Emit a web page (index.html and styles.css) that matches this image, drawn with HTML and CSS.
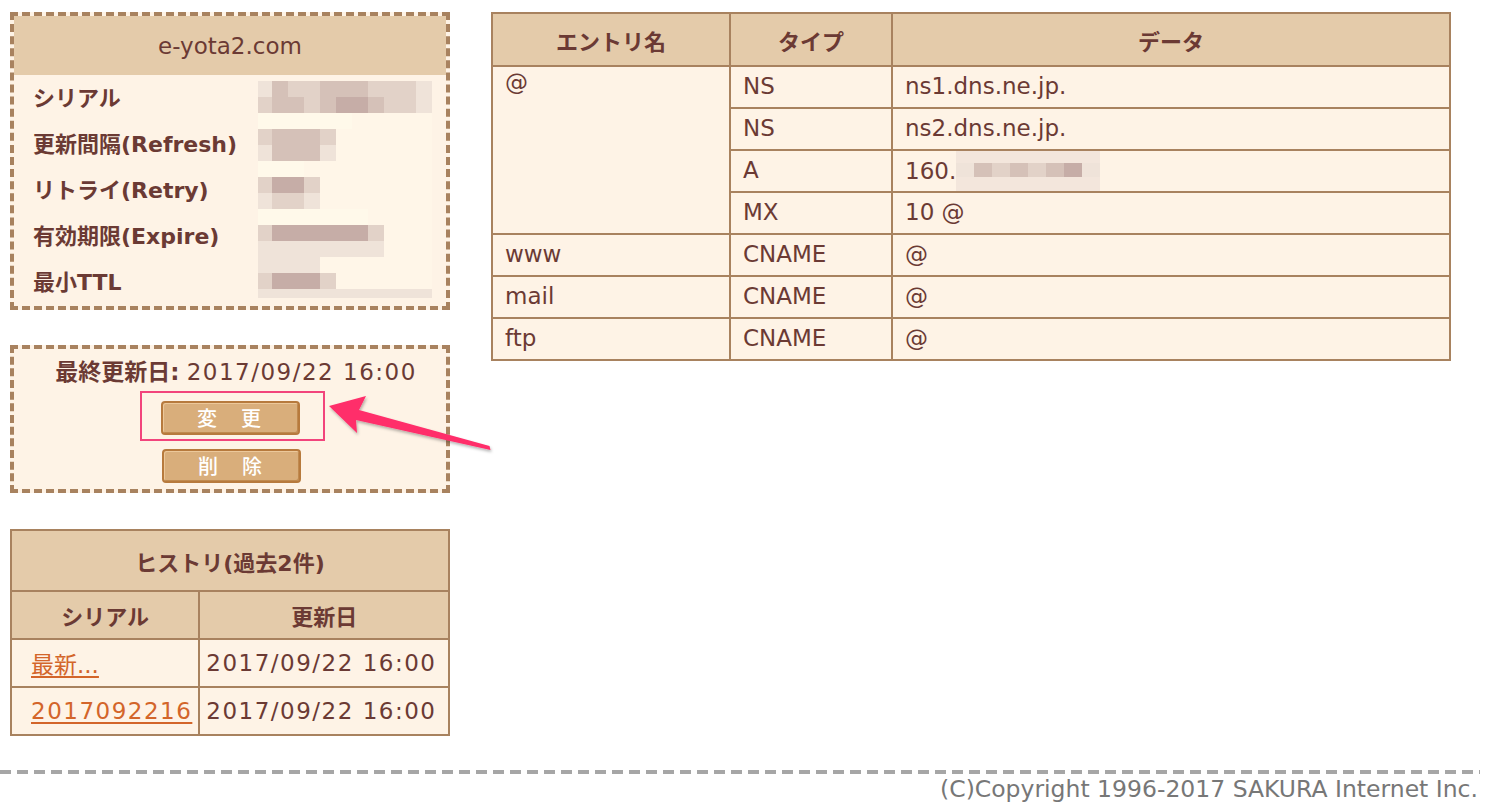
FILE: index.html
```html
<!DOCTYPE html>
<html lang="ja">
<head>
<meta charset="utf-8">
<title>DNS</title>
<link rel="stylesheet" href="styles.css">
</head>
<body>
<div class="page">
  <div class="side">
    <div class="soa">
      <div class="soa-head">e-yota2.com</div>
      <div class="soa-body">
        <div class="labels">
          <div class="lbl">シリアル</div>
          <div class="lbl">更新間隔(Refresh)</div>
          <div class="lbl">リトライ(Retry)</div>
          <div class="lbl">有効期限(Expire)</div>
          <div class="lbl">最小TTL</div>
        </div>
        <div class="mosaic">
          <div class="mr"><i class="b"></i><i class="d"></i><i class="c"></i><i class="c"></i><i class="d"></i><i class="d"></i><i class="d"></i><i class="c"></i><i class="c"></i><i class="c"></i><i class="b"></i></div>
          <div class="mr"><i class="c"></i><i class="d"></i><i class="d"></i><i class="c"></i><i class="d"></i><i class="e"></i><i class="e"></i><i class="d"></i><i class="c"></i><i class="c"></i><i class="b"></i></div>
          <div class="mr"><i class="l"></i><i class="l"></i><i class="l"></i><i class="l"></i><i class="l"></i><i class="l"></i></div>
          <div class="mr"><i class="c"></i><i class="d"></i><i class="d"></i><i class="d"></i><i class="c"></i></div>
          <div class="mr"><i class="b"></i><i class="d"></i><i class="d"></i><i class="d"></i><i class="b"></i></div>
          <div class="mr"><i class="l"></i><i class="l"></i><i class="l"></i></div>
          <div class="mr"><i class="c"></i><i class="e"></i><i class="e"></i><i class="c"></i></div>
          <div class="mr"><i class="b"></i><i class="c"></i><i class="c"></i><i class="b"></i></div>
          <div class="mr"><i class="l"></i><i class="l"></i><i class="l"></i><i class="l"></i><i class="l"></i><i class="l"></i><i class="l"></i></div>
          <div class="mr"><i class="c"></i><i class="e"></i><i class="e"></i><i class="e"></i><i class="e"></i><i class="e"></i><i class="e"></i><i class="c"></i></div>
          <div class="mr"><i class="b"></i><i class="b"></i><i class="b"></i><i class="b"></i><i class="b"></i><i class="b"></i><i class="b"></i><i class="b"></i></div>
          <div class="mr"><i class="b"></i><i class="b"></i><i class="b"></i><i class="b"></i></div>
          <div class="mr"><i class="c"></i><i class="e"></i><i class="e"></i><i class="e"></i><i class="c"></i></div>
          <div class="mr short"><i class="b"></i><i class="b"></i><i class="b"></i><i class="b"></i><i class="b"></i><i class="b"></i><i class="b"></i><i class="b"></i><i class="b"></i><i class="b"></i><i class="b"></i></div>
        </div>
      </div>
    </div>

    <div class="update">
      <div class="last"><b>最終更新日:</b> <span class="num">2017/09/22 16:00</span></div>
      <div class="mark">
        <button class="btn">変　更</button>
      </div>
      <button class="btn">削　除</button>
    </div>

    <table class="hist">
      <colgroup><col class="hc1"><col class="hc2"></colgroup>
      <tr class="h1"><th colspan="2">ヒストリ(過去2件)</th></tr>
      <tr class="h2"><th>シリアル</th><th>更新日</th></tr>
      <tr><td class="ser"><a href="#">最新...</a></td><td class="dt num">2017/09/22 16:00</td></tr>
      <tr><td class="ser"><a href="#" class="num">2017092216</a></td><td class="dt num">2017/09/22 16:00</td></tr>
    </table>
  </div>

  <table class="dns">
    <colgroup><col class="c1"><col class="c2"><col class="c3"></colgroup>
    <tr class="head"><th>エントリ名</th><th>タイプ</th><th>データ</th></tr>
    <tr><td rowspan="4" class="top">@</td><td>NS</td><td>ns1.dns.ne.jp.</td></tr>
    <tr><td>NS</td><td>ns2.dns.ne.jp.</td></tr>
    <tr><td>A</td><td class="ipcell"><span class="ip">160.</span><span class="ipblur"><i class="b"></i><i class="d"></i><i class="c"></i><i class="d"></i><i class="c"></i><i class="d"></i><i class="e"></i><i class="b"></i></span></td></tr>
    <tr><td>MX</td><td>10 @</td></tr>
    <tr><td>www</td><td>CNAME</td><td>@</td></tr>
    <tr><td>mail</td><td>CNAME</td><td>@</td></tr>
    <tr><td>ftp</td><td>CNAME</td><td>@</td></tr>
  </table>
</div>

<footer class="foot">
  <div class="dash"></div>
  <div class="copy">(C)Copyright 1996-2017 SAKURA Internet Inc.</div>
</footer>

<svg class="arrow" width="1488" height="810" viewBox="0 0 1488 810">
  <defs>
    <filter id="sh" x="-20%" y="-20%" width="140%" height="140%">
      <feDropShadow dx="1" dy="2" stdDeviation="1.5" flood-color="#000" flood-opacity="0.3"/>
    </filter>
  </defs>
  <polygon filter="url(#sh)" fill="#ff2d6b" points="329,406 366,396 359,410 489.5,446 490.5,450 356,420 357,433"/>
</svg>
</body>
</html>
```
FILE: styles.css
```css
html, body {
  margin: 0;
  padding: 0;
  background: #ffffff;
}
body {
  font-family: "DejaVu Sans", "Noto Sans CJK JP", sans-serif;
  font-size: 23px;
  color: #6b3a34;
  position: relative;
}
.num {
  letter-spacing: 1.5px;
}
.page {
  display: flex;
  align-items: flex-start;
  gap: 41px;
  padding: 12px 0 0 10px;
}
.side {
  width: 440px;
  display: flex;
  flex-direction: column;
}

/* SOA panel */
.soa {
  box-sizing: border-box;
  height: 298px;
  border: 4px dashed #a8825f;
  background: #fef3e6;
}
.soa-head {
  height: 59px;
  background: #e4cbaa;
  display: flex;
  align-items: center;
  justify-content: center;
  font-size: 23px;
}
.soa-body {
  display: flex;
  padding-top: 1px;
}
.labels {
  width: 225px;
  padding-left: 19px;
}
.lbl {
  height: 46px;
  line-height: 46px;
  font-weight: bold;
  font-size: 22px;
  white-space: nowrap;
}
.mosaic {
  margin-top: 5px;
  width: 174px;
  height: 217px;
  background: #fff6e8;
}
.mr {
  display: flex;
  height: 16px;
}
.mr.short {
  height: 9px;
}
.mosaic i, .ipblur i {
  display: block;
  width: 16px;
  height: 100%;
}
.mosaic i:first-child {
  width: 14px;
}
i.b { background: #efe3d9; }
i.c { background: #e2d2c8; }
i.d { background: #d5c1b8; }
i.e { background: #c6ada7; }
i.l { background: #fff9ea; }

/* update panel */
.update {
  box-sizing: border-box;
  margin-top: 35px;
  height: 148px;
  border: 4px dashed #a8825f;
  background: #fef3e6;
  display: flex;
  flex-direction: column;
  align-items: center;
  padding-top: 8px;
}
.last {
  height: 30px;
  line-height: 30px;
  padding-left: 12px;
  white-space: nowrap;
}
.last b {
  font-weight: bold;
}
.mark {
  margin-top: 4px;
  margin-left: 4px;
  border: 2px solid #f2447c;
  padding: 8px 23px 4px 19px;
}
.btn {
  display: block;
  box-sizing: border-box;
  width: 139px;
  height: 34px;
  margin: 0;
  padding: 0;
  border: 2px solid #b77a3d;
  border-radius: 4px;
  background: #d9ae7b;
  box-shadow: inset 1px 1px 0 #ecc89a, inset -1px -1px 0 #c08a4f;
  color: #ffffff;
  font-family: "Noto Sans CJK JP", sans-serif;
  font-size: 20px;
  font-weight: 500;
  letter-spacing: 2px;
  line-height: 28px;
}
.update > .btn {
  margin-top: 8px;
  margin-left: 2px;
}

/* history table */
.hist {
  margin-top: 36px;
  width: 440px;
  border-collapse: collapse;
  border: 2px solid #a8825f;
  background: #fef3e6;
}
.hc1 { width: 189px; }
.hc2 { width: 251px; }
.hist th, .hist td {
  border: 2px solid #a8825f;
  padding: 0;
  white-space: nowrap;
}
.hist th {
  background: #e4cbaa;
  font-weight: bold;
  font-size: 22px;
}
.hist .h1 th { height: 59px; }
.hist .h2 th { height: 46px; }
.hist td { height: 46px; }
.hist td.ser { padding-left: 19px; }
.hist td.dt { padding-left: 6px; }
.hist a {
  color: #d3652a;
  text-decoration: underline;
  text-underline-offset: 3px;
}

/* dns table */
.dns {
  width: 958px;
  table-layout: fixed;
  border-collapse: collapse;
  border: 2px solid #a8825f;
  background: #fef3e6;
}
.c1 { width: 238px; }
.c2 { width: 162px; }
.c3 { width: 558px; }
.dns th, .dns td {
  border: 2px solid #a8825f;
  padding: 0 12px;
  white-space: nowrap;
  text-align: left;
}
.dns th {
  background: #e4cbaa;
  text-align: center;
  font-weight: bold;
  font-size: 22px;
  height: 51px;
  padding: 0;
}
.dns td {
  height: 38px;
  padding-bottom: 2px;
}
.dns td.top {
  vertical-align: top;
  padding-top: 2px;
}
.dns td.ipcell {
  padding-bottom: 0;
}
.ip {
  display: inline-block;
  vertical-align: middle;
}
.ipblur {
  display: inline-flex;
  vertical-align: middle;
  height: 40px;
  background: #f3e6dc;
}
.ipblur i {
  height: 14px;
  margin-top: 12px;
  width: 18px;
}

/* footer */
.foot {
  margin-top: 34px;
  width: 1480px;
}
.dash {
  height: 4px;
  background: repeating-linear-gradient(90deg, #a6a6a6 0 11px, transparent 11px 17px);
}
.copy {
  text-align: right;
  color: #777777;
  font-size: 23.5px;
  line-height: 30px;
  padding-right: 2px;
}

.arrow {
  position: absolute;
  left: 0;
  top: 0;
  pointer-events: none;
}
```
